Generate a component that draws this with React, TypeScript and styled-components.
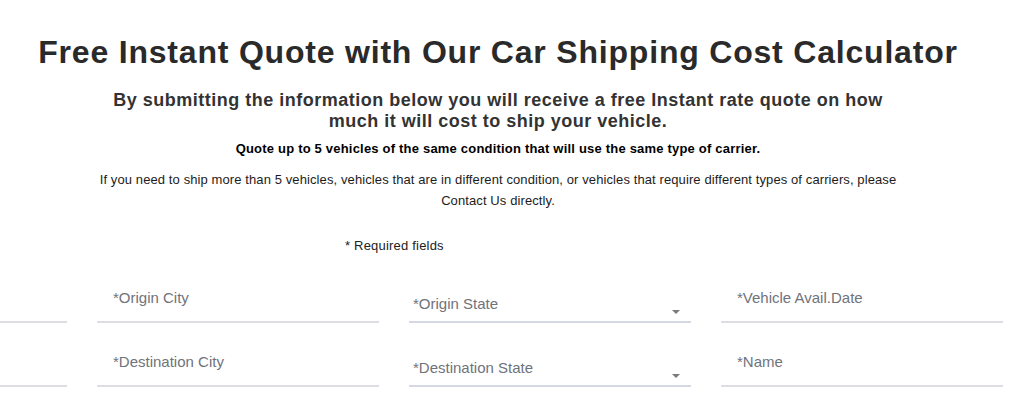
import React from 'react'
import styled, {createGlobalStyle} from 'styled-components'

const GlobalStyle = createGlobalStyle`
  html, body {
    margin: 0;
    padding: 0;
    background: #ffffff;
    font-family: 'Liberation Sans', Arial, Helvetica, sans-serif;
  }
  body {
    overflow: hidden;
  }
`

const Page = styled.div`
  width: 1024px;
  height: 405px;
  overflow: hidden;
`

const Intro = styled.header`
  width: 996px;
  display: flex;
  flex-direction: column;
  align-items: center;
  text-align: center;
`

const Title = styled.h1`
  margin: 34px 0 0;
  font-size: 32px;
  line-height: 36px;
  letter-spacing: 0.8px;
  font-weight: bold;
  color: #2a2a2a;
  white-space: nowrap;
`

const Lead = styled.h2`
  margin: 20px 0 0;
  max-width: 790px;
  font-size: 18px;
  line-height: 21px;
  letter-spacing: 0.5px;
  font-weight: bold;
  color: #333333;
`

const Limit = styled.p`
  margin: 9px 0 0;
  font-size: 13px;
  line-height: 16px;
  letter-spacing: 0.2px;
  font-weight: bold;
  color: #000000;
`

const Info = styled.p`
  margin: 12px 0 0;
  max-width: 820px;
  font-size: 13px;
  line-height: 21px;
  letter-spacing: 0.1px;
  color: #1c1c1c;
`

const Required = styled.p`
  margin: 27px 0 0 345px;
  font-size: 13px;
  line-height: 16px;
  letter-spacing: 0.2px;
  color: #222222;
`

const FormGrid = styled.div`
  margin-top: 21px;
  display: grid;
  grid-template-columns: 67px repeat(3, 282px);
  column-gap: 30px;
  row-gap: 16px;
`

const Field = styled.div<{$select?: boolean}>`
  position: relative;
  box-sizing: content-box;
  height: ${p => (p.$select ? '39px' : '33px')};
  padding: ${p => (p.$select ? '0 0 7px 4px' : '13px 0 0 16px')};
  border-bottom: 2px solid ${p => (p.$select ? '#d4d9e1' : '#dcdee2')};
  display: flex;
  align-items: ${p => (p.$select ? 'flex-end' : 'flex-start')};
`

const Label = styled.span`
  font-size: 15px;
  line-height: 20px;
  color: #6f737b;
  white-space: nowrap;
`

const Caret = styled.span`
  position: absolute;
  right: 11px;
  bottom: 7px;
  width: 0;
  height: 0;
  border-left: 4px solid transparent;
  border-right: 4px solid transparent;
  border-top: 4px solid #7b7b7b;
`

type FieldDef = {label: string; select?: boolean}

const rows: FieldDef[][] = [
  [{label: ''}, {label: '*Origin City'}, {label: '*Origin State', select: true}, {label: '*Vehicle Avail.Date'}],
  [{label: ''}, {label: '*Destination City'}, {label: '*Destination State', select: true}, {label: '*Name'}],
]

export default function App() {
  return (
    <Page>
      <GlobalStyle />
      <Intro>
        <Title>Free Instant Quote with Our Car Shipping Cost Calculator</Title>
        <Lead>
          By submitting the information below you will receive a free Instant rate quote on how much it will
          cost to ship your vehicle.
        </Lead>
        <Limit>Quote up to 5 vehicles of the same condition that will use the same type of carrier.</Limit>
        <Info>
          If you need to ship more than 5 vehicles, vehicles that are in different condition, or vehicles that
          require different types of carriers, please Contact Us directly.
        </Info>
      </Intro>
      <Required>* Required fields</Required>
      <FormGrid>
        {rows.flat().map((f, i) => (
          <Field key={i} $select={f.select}>
            {f.label && <Label>{f.label}</Label>}
            {f.select && <Caret />}
          </Field>
        ))}
      </FormGrid>
    </Page>
  )
}
